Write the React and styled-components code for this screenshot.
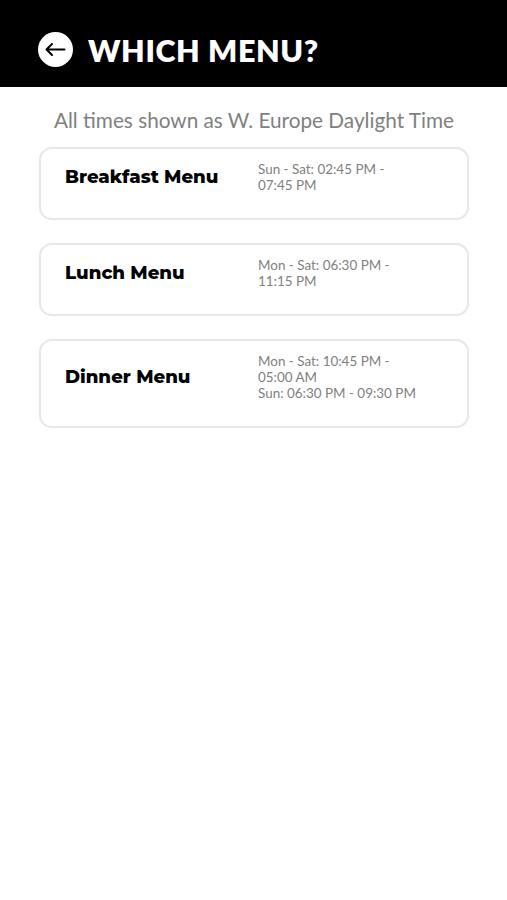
import React from "react";
import styled, { createGlobalStyle } from "styled-components";

const GlobalStyle = createGlobalStyle`
  * {
    box-sizing: border-box;
  }
  body {
    margin: 0;
    background: #fff;
    font-family: Lato, sans-serif;
  }
`;

const Header = styled.header`
  height: 87px;
  padding: 12px 38px 0;
  display: flex;
  align-items: center;
  gap: 15px;
  background: #000;
`;

const BackButton = styled.button`
  width: 35px;
  height: 35px;
  padding: 0;
  border: none;
  border-radius: 50%;
  background: #fff;
  display: flex;
  align-items: center;
  justify-content: center;
`;

const Title = styled.h1`
  margin: 0;
  padding-top: 1px;
  font-family: Lato, sans-serif;
  font-size: 30.5px;
  line-height: 35px;
  font-weight: 800;
  letter-spacing: 0.6px;
  white-space: nowrap;
  color: #fff;
`;

const Content = styled.main`
  padding: 21px 38px 0 39px;
`;

const Notice = styled.p`
  margin: 0 0 14px;
  font-size: 20.75px;
  line-height: 25px;
  text-align: center;
  white-space: nowrap;
  color: #808080;
`;

const MenuList = styled.div`
  display: flex;
  flex-direction: column;
  gap: 23px;
`;

const MenuCard = styled.div`
  padding: 12px 24px 24.6px;
  display: flex;
  border: 2px solid #e8e8e8;
  border-radius: 13px;
  box-shadow: 0 0 1px #e8e8e8;
`;

const MenuName = styled.h2`
  width: 193px;
  margin: 0;
  flex-shrink: 0;
  align-self: center;
  font-family: Montserrat, Inter, sans-serif;
  font-size: 18.2px;
  line-height: 22px;
  font-weight: 800;
  white-space: nowrap;
  color: #000;
`;

const Times = styled.div`
  font-size: 13.45px;
  line-height: 16.2px;
  white-space: nowrap;
  color: #808080;
`;

const menus = [
  { name: "Breakfast Menu", times: ["Sun - Sat: 02:45 PM -", "07:45 PM"] },
  { name: "Lunch Menu", times: ["Mon - Sat: 06:30 PM -", "11:15 PM"] },
  {
    name: "Dinner Menu",
    times: ["Mon - Sat: 10:45 PM -", "05:00 AM", "Sun: 06:30 PM - 09:30 PM"],
  },
];

const App = () => {
  return (
    <>
      <GlobalStyle />
      <Header>
        <BackButton aria-label="Back">
          <svg width="23" height="19" viewBox="0 0 23 19" fill="none">
            <path
              d="M20.5 9.5H2.5M8 4L2.5 9.5L8 15"
              stroke="#000"
              strokeWidth="2"
              strokeLinecap="round"
              strokeLinejoin="round"
            />
          </svg>
        </BackButton>
        <Title>WHICH MENU?</Title>
      </Header>
      <Content>
        <Notice>All times shown as W. Europe Daylight Time</Notice>
        <MenuList>
          {menus.map(({ name, times }) => (
            <MenuCard key={name}>
              <MenuName>{name}</MenuName>
              <Times>
                {times.map((time) => (
                  <div key={time}>{time}</div>
                ))}
              </Times>
            </MenuCard>
          ))}
        </MenuList>
      </Content>
    </>
  );
};

export default App;
